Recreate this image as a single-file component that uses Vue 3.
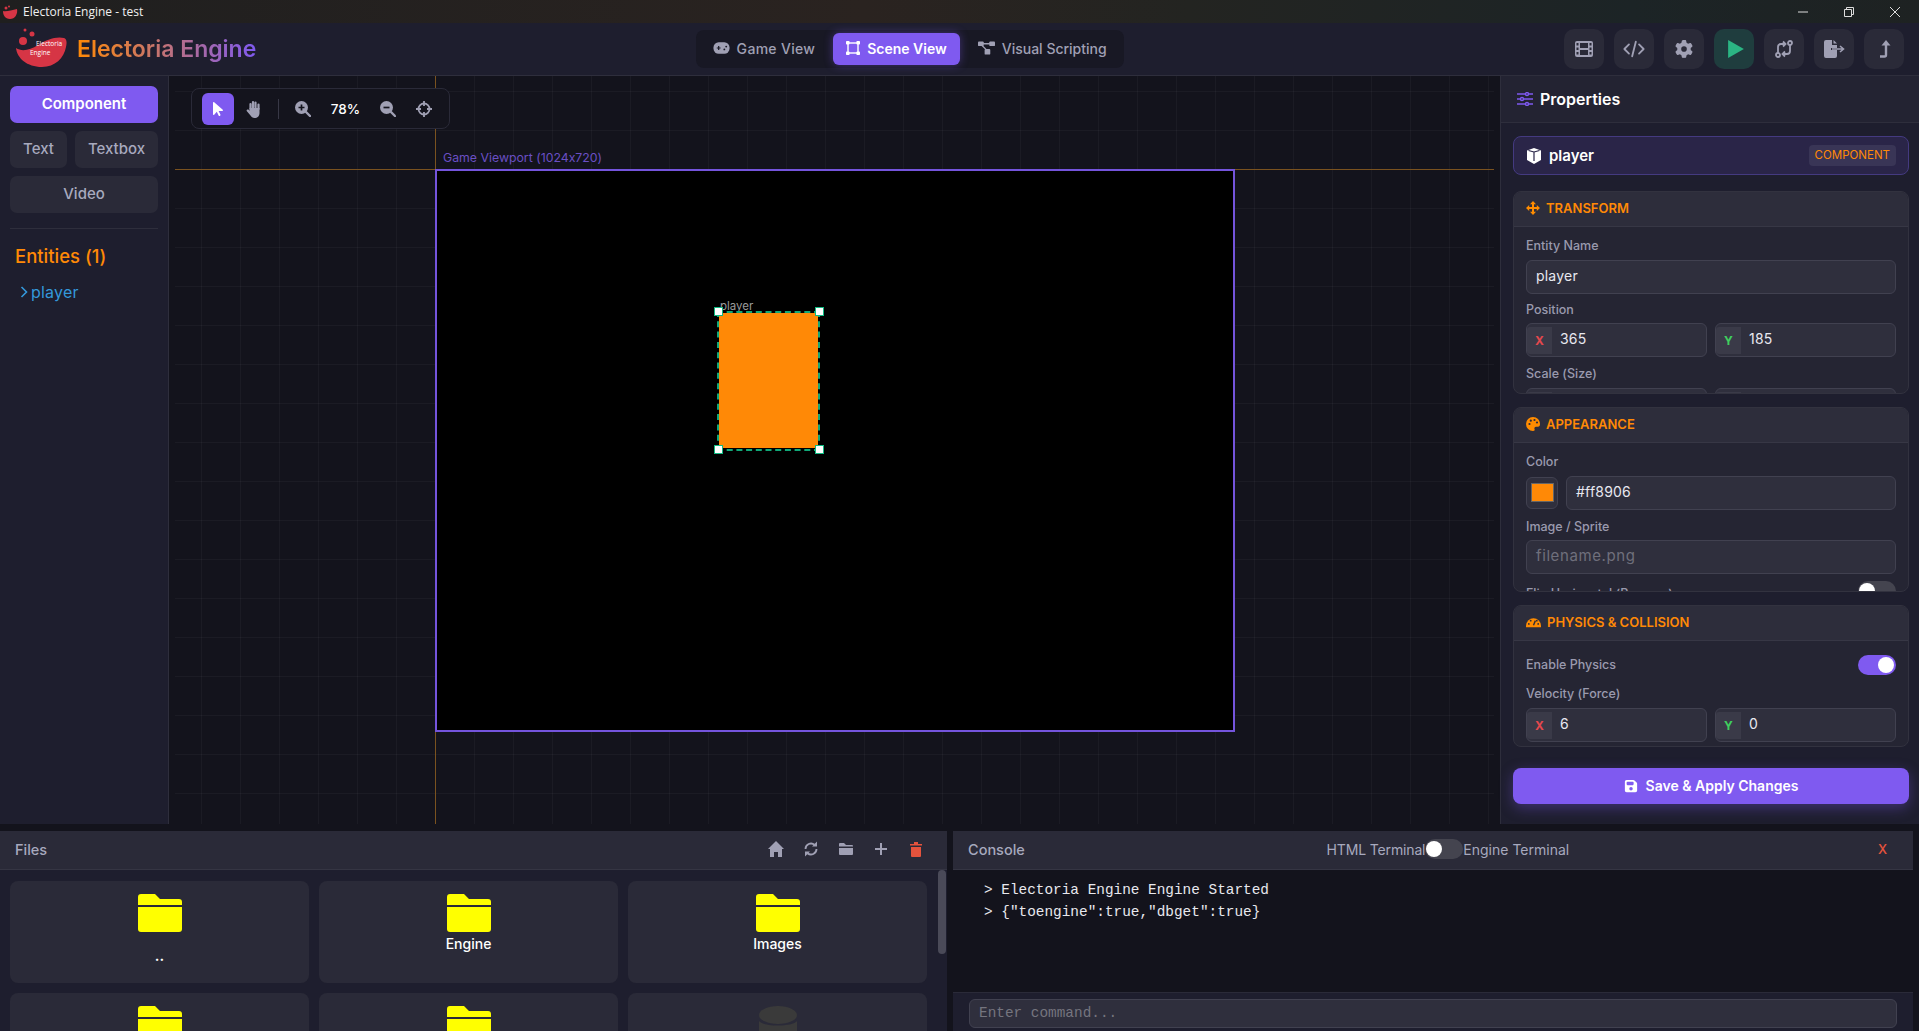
<template>
  <div class="app">
    <div class="titlebar">
      <svg class="tb-logo" viewBox="0 0 16 14"><path d="M1 6c3 1 9-1 14-2 1 5-2 10-7 10S1 10 1 6z" fill="#d63545"/><circle cx="4" cy="3" r="1.5" fill="#d63545"/><circle cx="7" cy="1.5" r="1" fill="#d63545"/></svg>
      <span class="tb-title">Electoria Engine - test</span>
      <div class="tb-ctrls">
        <svg viewBox="0 0 12 12"><path d="M1 6h10" stroke="#ddd" fill="none"/></svg>
        <svg viewBox="0 0 12 12"><path d="M1.5 3.5h7v7h-7zM3.5 3.5v-2h7v7h-2" stroke="#ddd" fill="none"/></svg>
        <svg viewBox="0 0 12 12"><path d="M1 1l10 10M11 1L1 11" stroke="#ddd" fill="none"/></svg>
      </div>
    </div>

    <header class="header">
      <div class="brand">
        <svg class="logo" viewBox="0 0 52 42">
          <circle cx="8" cy="14" r="4" fill="#d63545"/>
          <circle cx="17" cy="7" r="2.5" fill="#d63545"/>
          <circle cx="10" cy="3" r="1.5" fill="#d63545"/>
          <path d="M1 21c6 4 14 2 22-3 8-5 18-9 26-7 3 1 3 5 2 9-2 11-11 20-24 20-15 0-25-9-26-19z" fill="#d63545"/>
          <text x="21" y="19" class="logo-t">Electoria</text>
          <text x="15" y="28" class="logo-t">Engine</text>
        </svg>
        <span class="brand-name">Electoria Engine</span>
      </div>
      <nav class="tabs">
        <div class="tab">
          <svg viewBox="0 0 18 14"><rect x="0.5" y="1" width="17" height="12" rx="5.5" fill="#a0a0b4"/><path d="M4 7h4M6 5v4" stroke="#1a1a26" stroke-width="1.3"/><circle cx="12" cy="8.5" r="1" fill="#1a1a26"/><circle cx="14" cy="5.5" r="1" fill="#1a1a26"/></svg>
          Game View
        </div>
        <div class="tab active">
          <svg viewBox="0 0 14 14"><rect x="2" y="2" width="10" height="10" fill="none" stroke="#fff" stroke-width="1.4"/><g fill="#fff"><rect x="0" y="0" width="3.6" height="3.6" rx=".8"/><rect x="10.4" y="0" width="3.6" height="3.6" rx=".8"/><rect x="0" y="10.4" width="3.6" height="3.6" rx=".8"/><rect x="10.4" y="10.4" width="3.6" height="3.6" rx=".8"/></g></svg>
          Scene View
        </div>
        <div class="tab tight">
          <svg viewBox="0 0 18 14"><g fill="#a0a0b4"><rect x="0" y="0" width="6" height="5" rx="1"/><rect x="12" y="0" width="6" height="5" rx="1"/><rect x="7" y="8" width="6" height="6" rx="1"/></g><path d="M5 2.5h8M4 4l5 5" stroke="#a0a0b4" stroke-width="1.4" fill="none"/></svg>
          Visual Scripting
        </div>
      </nav>
      <div class="head-btns">
        <button class="hbtn">
          <svg viewBox="0 0 18 16"><rect x="0" y="0" width="18" height="16" rx="2" fill="#a0a0b4"/><g fill="#2a2a38"><rect x="5" y="2" width="8" height="5"/><rect x="5" y="9" width="8" height="5"/><rect x="1.5" y="2" width="2" height="2.5"/><rect x="1.5" y="6.5" width="2" height="2.5"/><rect x="1.5" y="11" width="2" height="2.5"/><rect x="14.5" y="2" width="2" height="2.5"/><rect x="14.5" y="6.5" width="2" height="2.5"/><rect x="14.5" y="11" width="2" height="2.5"/></g></svg>
        </button>
        <button class="hbtn">
          <svg viewBox="0 0 24 18" class="wide"><path d="M6.5 4L1.5 9l5 5M17.5 4l5 5-5 5M14 1l-4 16" stroke="#a0a0b4" stroke-width="2" fill="none" stroke-linecap="round" stroke-linejoin="round"/></svg>
        </button>
        <button class="hbtn">
          <svg viewBox="0 0 512 512"><path fill="#a0a0b4" d="M495.9 166.6c3.2 8.7 .5 18.4-6.4 24.6l-43.3 39.4c1.1 8.3 1.7 16.8 1.7 25.4s-.6 17.1-1.7 25.4l43.3 39.4c6.9 6.2 9.6 15.9 6.4 24.6c-4.4 11.9-9.7 23.3-15.8 34.3l-4.7 8.1c-6.6 11-14 21.4-22.1 31.2c-5.9 7.2-15.7 9.6-24.5 6.8l-55.7-17.7c-13.4 10.3-28.2 18.9-44 25.4l-12.5 57.1c-2 9.1-9 16.3-18.2 17.8c-13.8 2.3-28 3.5-42.5 3.5s-28.7-1.2-42.5-3.5c-9.2-1.5-16.2-8.7-18.2-17.8l-12.5-57.1c-15.8-6.5-30.6-15.1-44-25.4L83.1 425.9c-8.8 2.8-18.6 .3-24.5-6.8c-8.1-9.8-15.5-20.2-22.1-31.2l-4.7-8.1c-6.1-11-11.4-22.4-15.8-34.3c-3.2-8.7-.5-18.4 6.4-24.6l43.3-39.4C64.6 273.1 64 264.6 64 256s.6-17.1 1.7-25.4L22.4 191.2c-6.9-6.2-9.6-15.9-6.4-24.6c4.4-11.9 9.7-23.3 15.8-34.3l4.7-8.1c6.6-11 14-21.4 22.1-31.2c5.9-7.2 15.7-9.6 24.5-6.8l55.7 17.7c13.4-10.3 28.2-18.9 44-25.4l12.5-57.1c2-9.1 9-16.3 18.2-17.8C227.3 1.2 241.5 0 256 0s28.7 1.2 42.5 3.5c9.2 1.5 16.2 8.7 18.2 17.8l12.5 57.1c15.8 6.5 30.6 15.1 44 25.4l55.7-17.7c8.8-2.8 18.6-.3 24.5 6.8c8.1 9.8 15.5 20.2 22.1 31.2l4.7 8.1c6.1 11 11.4 22.4 15.8 34.3zM256 336a80 80 0 1 0 0-160 80 80 0 1 0 0 160z"/></svg>
        </button>
        <button class="hbtn play">
          <svg viewBox="0 0 14 16"><path d="M0 0l14 8-14 8z" fill="#2bb583"/></svg>
        </button>
        <button class="hbtn">
          <svg viewBox="0 0 18 18"><g fill="none" stroke="#a0a0b4" stroke-width="1.8"><circle cx="3" cy="15" r="2"/><circle cx="15" cy="3" r="2"/><path d="M3 13V7c0-2 1-3 3-3h4M15 5v6c0 2-1 3-3 3H8"/><path d="M8 1.5L10.5 4 8 6.5M10 11.5L7.5 14l2.5 2.5"/></g></svg>
        </button>
        <button class="hbtn">
          <svg viewBox="0 0 22 18" class="wide"><path d="M1 2a2 2 0 0 1 2-2h6v5h5v3H8v2h6v6a2 2 0 0 1-2 2H3a2 2 0 0 1-2-2z" fill="#a0a0b4"/><path d="M10.5 0L14 3.5h-3.5z" fill="#a0a0b4"/><path d="M9 9h11M17 6l3.500 3-3.500 3" stroke="#a0a0b4" stroke-width="1.6" fill="none"/></svg>
        </button>
        <button class="hbtn">
          <svg viewBox="0 0 14 18"><path d="M3 16.5h4.5a1.500 1.500 0 0 0 1.500-1.500V4" stroke="#a0a0b4" stroke-width="2.4" fill="none"/><path d="M4.5 5.5L9 0l4.500 5.500z" fill="#a0a0b4"/></svg>
        </button>
      </div>
    </header>

    <main class="main">
      <aside class="side">
        <div class="add-btns">
          <button class="add primary full">Component</button>
          <button class="add small">Text</button>
          <button class="add big">Textbox</button>
          <button class="add full">Video</button>
        </div>
        <div class="side-line"></div>
        <h3 class="ent-title">Entities (1)</h3>
        <div class="ent">
          <svg viewBox="0 0 8 12"><path d="M1.5 1l5 5-5 5" fill="none" stroke="#3498db" stroke-width="1.6"/></svg>
          player
        </div>
      </aside>

      <section class="canvas">
        <div class="guide-v"></div>
        <div class="guide-h"></div>
        <div class="vp-label">Game Viewport (1024x720)</div>
        <div class="viewport">
          <div class="entity"></div>
          <div class="ent-name">player</div>
          <div class="select">
            <i class="hd tl"></i><i class="hd tr"></i><i class="hd bl"></i><i class="hd br"></i>
          </div>
        </div>
        <div class="toolbar">
          <button class="tool on">
            <svg viewBox="0 0 320 512"><path fill="#fff" d="M0 55.200V426c0 12.200 9.900 22 22 22c6.300 0 12.400-2.700 16.600-7.500L121.200 346l58.100 116.300c7.900 15.800 27.100 22.200 42.900 14.300s22.200-27.100 14.300-42.900L179.800 320H297.900c12.200 0 22.100-9.900 22.100-22.100c0-6.300-2.700-12.300-7.400-16.500L38.600 37.900C34.300 34.100 28.900 32 23.200 32C10.400 32 0 42.400 0 55.200z"/></svg>
          </button>
          <button class="tool hand">
            <svg viewBox="0 0 16 18"><g stroke="#a0a0b4" stroke-width="2.2" stroke-linecap="round" fill="none"><path d="M4.500 9V4M7 8V2M9.500 8V2.500M12.500 9V4.500"/></g><path d="M3.500 8h10v5c0 3-2 5-5 5-2 0-3-1-4-2.500L.7 11c-.6-1 1-2.200 2-1.200l1 1z" fill="#a0a0b4"/></svg>
          </button>
          <div class="tool-sep"></div>
          <button class="tool">
            <svg viewBox="0 0 16 16"><circle cx="6.5" cy="6.5" r="6.5" fill="#a0a0b4"/><path d="M11 11l4 4" stroke="#a0a0b4" stroke-width="2.4" stroke-linecap="round"/><path d="M3.500 6.500h6M6.500 3.500v6" stroke="#14141d" stroke-width="1.7"/></svg>
          </button>
          <span class="zoom">78%</span>
          <button class="tool">
            <svg viewBox="0 0 16 16"><circle cx="6.5" cy="6.5" r="6.5" fill="#a0a0b4"/><path d="M11 11l4 4" stroke="#a0a0b4" stroke-width="2.4" stroke-linecap="round"/><path d="M3.500 6.500h6" stroke="#14141d" stroke-width="1.7"/></svg>
          </button>
          <button class="tool aim">
            <svg viewBox="0 0 16 16"><circle cx="8" cy="8" r="5.5" fill="none" stroke="#a0a0b4" stroke-width="1.8"/><path d="M8 0v5M8 11v5M0 8h5M11 8h5" stroke="#a0a0b4" stroke-width="1.8"/></svg>
          </button>
        </div>
      </section>

      <aside class="props">
        <div class="props-head">
          <svg viewBox="0 0 16 14"><g stroke="#7f5af0" stroke-width="1.4" fill="#20202e"><path d="M0 2h16M0 7h16M0 12h16"/><circle cx="10" cy="2" r="1.5"/><circle cx="5" cy="7" r="1.5"/><circle cx="10" cy="12" r="1.5"/></g></svg>
          Properties
        </div>
        <div class="props-body">
          <div class="sel-card">
            <svg viewBox="0 0 16 16"><path d="M8 0l7 2.500V12l-7 4-7-4V2.500z" fill="#fff"/><path d="M8 4v9M8 4L2.500 2.500M8 4l5.500-1.500" stroke="#2a2548" stroke-width="1.2" fill="none"/></svg>
            <span class="sel-name">player</span>
            <span class="sel-tag">COMPONENT</span>
          </div>

          <section class="group g-trans">
            <div class="g-head">
              <svg viewBox="0 0 14 14"><path d="M7 0l3 3.200H8V6h2.800V4L14 7l-3.200 3V8H8v2.800h2L7 14l-3-3.200h2V8H3.200v2L0 7l3.200-3v2H6V3.200H4z" fill="#ff8c00"/></svg>
              TRANSFORM
            </div>
            <div class="g-body">
              <label class="lbl">Entity Name</label>
              <div class="field">player</div>
              <label class="lbl">Position</label>
              <div class="xy">
                <div class="field num"><b class="ax x">X</b>365</div>
                <div class="field num"><b class="ax y">Y</b>185</div>
              </div>
              <label class="lbl">Scale (Size)</label>
              <div class="xy">
                <div class="field num"><b class="ax"></b></div>
                <div class="field num"><b class="ax"></b></div>
              </div>
            </div>
          </section>

          <section class="group g-look">
            <div class="g-head">
              <svg viewBox="0 0 14 14"><path d="M7 0a7 7 0 0 0 0 14c1.500 0 2-1 1.500-2-.5-1.300.3-2.300 1.500-2.300h2c1.300 0 2-1 2-2.700C14 3 11 0 7 0z" fill="#ff8c00"/><g fill="#2d2d3b"><circle cx="3.5" cy="7" r="1.1"/><circle cx="4.8" cy="3.7" r="1.1"/><circle cx="8.5" cy="3" r="1.1"/><circle cx="11" cy="5.5" r="1.1"/></g></svg>
              APPEARANCE
            </div>
            <div class="g-body">
              <label class="lbl">Color</label>
              <div class="color-row">
                <div class="swatch"><i></i></div>
                <div class="field grow">#ff8906</div>
              </div>
              <label class="lbl">Image / Sprite</label>
              <div class="field ph">filename.png</div>
              <div class="row-toggle flip">
                <label class="lbl">Flip Horizontal (Reverse)</label>
                <span class="switch"><i></i></span>
              </div>
            </div>
          </section>

          <section class="group g-phys">
            <div class="g-head">
              <svg viewBox="0 4 16 10" class="gauge"><path d="M0 12.500a8 8 0 0 1 16 0V14H0z" fill="#ff8c00"/><g fill="#2d2d3b"><circle cx="3" cy="10.5" r="1"/><circle cx="5" cy="7" r="1"/><circle cx="13" cy="10.5" r="1"/><circle cx="11.5" cy="7" r="1"/></g><path d="M8 12l2-5" stroke="#2d2d3b" stroke-width="1.5"/></svg>
              PHYSICS &amp; COLLISION
            </div>
            <div class="g-body">
              <div class="row-toggle">
                <label class="lbl">Enable Physics</label>
                <span class="switch on"><i></i></span>
              </div>
              <label class="lbl">Velocity (Force)</label>
              <div class="xy">
                <div class="field num"><b class="ax x">X</b>6</div>
                <div class="field num"><b class="ax y">Y</b>0</div>
              </div>
            </div>
          </section>

          <button class="save">
            <svg viewBox="0 0 448 512"><path fill="#fff" d="M64 32C28.700 32 0 60.700 0 96V416c0 35.300 28.700 64 64 64H384c35.300 0 64-28.700 64-64V173.300c0-17-6.700-33.300-18.700-45.300L352 50.700C340 38.700 323.700 32 306.700 32H64zm0 96c0-17.700 14.300-32 32-32H288c17.700 0 32 14.300 32 32v64c0 17.700-14.300 32-32 32H96c-17.700 0-32-14.300-32-32V128zM224 288a64 64 0 1 1 0 128 64 64 0 1 1 0-128z"/></svg>
            Save &amp; Apply Changes
          </button>
        </div>
      </aside>
    </main>

    <div class="bottom">
      <section class="files">
        <div class="panel-head">
          <span class="panel-title">Files</span>
          <div class="file-tools">
            <svg viewBox="0 0 16 16"><path d="M8 0l8 8h-2v8h-4v-5H6v5H2V8H0z" fill="#a0a0b4"/></svg>
            <svg viewBox="0 0 14 16"><g fill="none" stroke="#a0a0b4" stroke-width="1.8"><path d="M1.500 8a5.500 5.500 0 0 1 9-4.200M12.500 8a5.500 5.500 0 0 1-9 4.200"/></g><path d="M13 .5v5H8zM1 15.500v-5h5z" fill="#a0a0b4"/></svg>
            <svg viewBox="0 0 16 16"><path d="M1 3a1 1 0 0 1 1-1h4l2 2h6a1 1 0 0 1 1 1v.5H1zM1 7h14v6a1 1 0 0 1-1 1H2a1 1 0 0 1-1-1z" fill="#a0a0b4"/></svg>
            <svg viewBox="0 0 16 16"><path d="M8 2v12M2 8h12" stroke="#a0a0b4" stroke-width="2"/></svg>
            <svg viewBox="0 0 14 16"><path d="M1 3h12v1.500H1zM5 1h4v2H5zM2 6h10v9a1 1 0 0 1-1 1H3a1 1 0 0 1-1-1z" fill="#e5533d"/></svg>
          </div>
        </div>
        <div class="file-grid">
          <div v-for="f in files" :key="f.id" class="file">
            <svg v-if="f.type == 'folder'" class="folder" viewBox="0 0 44 38">
              <path d="M0 3a3 3 0 0 1 3-3h14l5 5h19a3 3 0 0 1 3 3v3H0z" fill="#ffff00"/>
              <path d="M0 13h44v22a3 3 0 0 1-3 3H3a3 3 0 0 1-3-3z" fill="#ffff00"/>
            </svg>
            <svg v-else class="folder" viewBox="0 0 44 38">
              <ellipse cx="22" cy="9" rx="19" ry="9" fill="#3a3a3a"/>
              <path d="M3 15c4 6 34 6 38 0v14c-4 8-34 8-38 0z" fill="#3a3a3a"/>
            </svg>
            <span v-if="f.name" class="file-name" :class="{ up: f.name == '..' }">{{ f.name }}</span>
          </div>
        </div>
        <div class="scroll-thumb"></div>
      </section>

      <section class="console">
        <div class="panel-head">
          <span class="panel-title">Console</span>
          <div class="term-switch">
            <span class="html-label">HTML Terminal</span>
            <span class="switch"><i></i></span>
            <span>Engine Terminal</span>
          </div>
          <span class="close">X</span>
        </div>
        <div class="log">
          <div v-for="(l, i) in logs" :key="i" class="log-line">&gt; {{ l }}</div>
        </div>
        <div class="cmd-row">
          <div class="cmd">Enter command...</div>
        </div>
      </section>
    </div>
  </div>
</template>

<script setup>
const files = [
  { id: 1, name: '..', type: 'folder' },
  { id: 2, name: 'Engine', type: 'folder' },
  { id: 3, name: 'Images', type: 'folder' },
  { id: 4, name: '', type: 'folder' },
  { id: 5, name: '', type: 'folder' },
  { id: 6, name: '', type: 'db' }
]

const logs = [
  'Electoria Engine Engine Started',
  '{"toengine":true,"dbget":true}'
]
</script>

<style>
body { margin: 0; background: #13131c; }
</style>

<style scoped>
.app {
  width: 1919px;
  height: 1031px;
  overflow: hidden;
  display: flex;
  flex-direction: column;
  background: #13131c;
  font-family: Inter, "Open Sans", sans-serif;
  font-feature-settings: "calt" 0;
  color: #fffffe;
}

button {
  font-family: inherit;
  font-feature-settings: inherit;
  border: none;
  padding: 0;
}

/* title bar */
.titlebar {
  height: 23px;
  flex: none;
  display: flex;
  align-items: center;
  background: linear-gradient(90deg, #1f1f1f, #2a2320 45%, #232421 62%, #1c2426 85%, #1e2222);
}
.tb-logo { width: 16px; height: 14px; margin-left: 2px; }
.tb-title {
  margin-left: 5px;
  font-family: "Open Sans", sans-serif;
  font-size: 12px;
  color: #f0f0f0;
}
.tb-ctrls {
  margin-left: auto;
  display: flex;
  gap: 34px;
  padding-right: 18px;
}
.tb-ctrls svg { width: 12px; height: 12px; display: block; }

/* header */
.header {
  height: 53px;
  flex: none;
  box-sizing: border-box;
  display: flex;
  align-items: center;
  justify-content: space-between;
  padding: 0 15px;
  background: #1e1e2e;
  border-bottom: 1px solid #2e2e3c;
}
.brand { display: flex; align-items: center; gap: 10px; }
.logo { width: 52px; height: 42px; margin-top: -2px; }
.logo-t { font-size: 6.5px; fill: #fff; font-family: "Open Sans", sans-serif; }
.brand-name {
  font-size: 23px;
  font-weight: 600;
  background: linear-gradient(90deg, #ff8906, #7f5af0);
  -webkit-background-clip: text;
  background-clip: text;
  color: transparent;
}
.tabs {
  display: flex;
  align-items: center;
  gap: 4px;
  height: 38px;
  box-sizing: border-box;
  padding: 3px;
  margin-left: -1px;
  background: #181824;
  border-radius: 8px;
}
.tab {
  height: 32px;
  box-sizing: border-box;
  display: flex;
  align-items: center;
  gap: 7px;
  padding: 0 14px 2px;
  border-radius: 6px;
  font-size: 14px;
  font-weight: 500;
  letter-spacing: .3px;
  color: #a0a0b4;
}
.tab.tight { letter-spacing: 0; }
.tab svg { width: 17px; height: 14px; }
.tab.active {
  padding: 0 13px 2px;
  background: #7f5af0;
  color: #fff;
  font-weight: 600;
  letter-spacing: 0;
  box-shadow: 0 0 10px rgba(127, 90, 240, .4);
}
.tab.active svg { width: 14px; }
.head-btns { display: flex; gap: 10px; }
.hbtn {
  width: 40px;
  height: 40px;
  display: flex;
  align-items: center;
  justify-content: center;
  background: #2a2a38;
  border-radius: 10px;
}
.hbtn svg { width: 18px; height: 18px; }
.hbtn svg.wide { width: 22px; }
.hbtn.play { background: #1f3d3e; }
.hbtn.play svg { margin-left: 4px; }

/* main */
.main { height: 748px; flex: none; display: flex; }

.side {
  width: 169px;
  flex: none;
  box-sizing: border-box;
  padding: 10px 10px 0;
  background: #1e1e2e;
  border-right: 1px solid #2e2e3c;
}
.add-btns { display: flex; flex-wrap: wrap; gap: 8px; }
.add {
  height: 37px;
  padding-bottom: 2px;
  border-radius: 7px;
  background: #2a2a38;
  color: #a7a9be;
  font-size: 15px;
  font-weight: 500;
}
.add.full { width: 148px; }
.add.small { width: 57px; }
.add.big { width: 83px; }
.add.primary { background: #7f5af0; color: #fff; font-weight: 600; }
.side-line { height: 1px; background: #2e2e3c; margin: 15px 0 0; }
.ent-title {
  margin: 15px 0 0 5px;
  font-size: 18.5px;
  line-height: 24px;
  font-weight: 500;
  color: #ff8906;
}
.ent {
  display: flex;
  align-items: center;
  gap: 3px;
  margin: 14px 0 0 10px;
  font-size: 16px;
  letter-spacing: .2px;
  color: #3498db;
}
.ent svg { width: 8px; height: 12px; }

/* canvas */
.canvas {
  flex: 1;
  position: relative;
  overflow: hidden;
  margin: 0 6px;
  background-color: #13131c;
  background-image:
    linear-gradient(rgba(255, 255, 255, .035) 1px, transparent 1px),
    linear-gradient(90deg, rgba(255, 255, 255, .035) 1px, transparent 1px);
  background-size: 39px 39px;
  background-position: 26px 15px;
}
.guide-v {
  position: absolute;
  left: 260px;
  top: 0;
  bottom: 0;
  width: 1px;
  background: #7a521f;
}
.guide-h {
  position: absolute;
  left: 0;
  right: 0;
  top: 93px;
  height: 1px;
  background: #7a521f;
}
.vp-label {
  position: absolute;
  left: 268px;
  top: 74px;
  font-size: 12.3px;
  color: #6a4fc4;
}
.viewport {
  position: absolute;
  left: 260px;
  top: 93px;
  width: 800px;
  height: 563px;
  box-sizing: border-box;
  background: #000;
  border: 2px solid #7454dc;
}
.entity {
  position: absolute;
  left: 282px;
  top: 142px;
  width: 99px;
  height: 135px;
  background: #ff8906;
}
.ent-name {
  position: absolute;
  left: 283px;
  top: 129px;
  font-size: 11.5px;
  line-height: 13px;
  color: #9a9a9a;
}
.select {
  position: absolute;
  left: 280px;
  top: 140px;
  width: 103px;
  height: 140px;
  box-sizing: border-box;
  border: 2px dashed #10a878;
}
.hd {
  position: absolute;
  width: 9px;
  height: 9px;
  box-sizing: border-box;
  background: #fff;
  border: 1px solid #10b981;
}
.tl { left: -5px; top: -6px; }
.tr { right: -6px; top: -6px; }
.bl { left: -5px; bottom: -5px; }
.br { right: -6px; bottom: -5px; }

.toolbar {
  position: absolute;
  left: 16px;
  top: 12px;
  width: 259px;
  height: 41px;
  box-sizing: border-box;
  display: flex;
  align-items: center;
  padding: 0 10px;
  background: #14141d;
  border: 1px solid #2a2a38;
  border-radius: 8px;
}
.tool {
  width: 32px;
  height: 32px;
  flex: none;
  display: flex;
  align-items: center;
  justify-content: center;
  background: none;
  border-radius: 6px;
}
.tool svg { width: 16px; height: 16px; }
.tool.on { background: #7f5af0; }
.tool.hand { margin-left: 4px; }
.tool.hand svg { width: 16px; height: 18px; }
.tool.aim { margin-left: 4px; }
.tool-sep { width: 1px; height: 20px; flex: none; margin: 0 8px; background: #383846; }
.zoom {
  width: 53px;
  flex: none;
  text-align: center;
  font-size: 13.5px;
  font-weight: 500;
  color: #fff;
}

/* properties */
.props {
  width: 419px;
  flex: none;
  box-sizing: border-box;
  background: #1e1e2e;
  border-left: 1px solid #2e2e3c;
  display: flex;
  flex-direction: column;
}
.props-head {
  height: 47px;
  flex: none;
  box-sizing: border-box;
  display: flex;
  align-items: center;
  gap: 7px;
  padding-left: 16px;
  font-size: 16px;
  font-weight: 600;
  background: #232332;
  border-bottom: 1px solid #2e2e3c;
}
.props-head svg { width: 16px; height: 14px; }
.props-body { padding: 13px 10px 0 12px; }
.sel-card {
  height: 39px;
  box-sizing: border-box;
  display: flex;
  align-items: center;
  padding: 0 12px;
  background: #2a2548;
  border: 1px solid #443a80;
  border-radius: 8px;
}
.sel-card svg { width: 16px; height: 16px; }
.sel-name { margin-left: 7px; font-size: 15px; font-weight: 600; }
.sel-tag {
  margin-left: auto;
  height: 21px;
  line-height: 21px;
  padding: 0 6px;
  font-size: 11.5px;
  color: #ff8906;
  background: #393556;
  border-radius: 4px;
}
.group {
  box-sizing: border-box;
  margin-top: 13px;
  overflow: hidden;
  background: #252533;
  border: 1px solid #32323f;
  border-radius: 8px;
}
.g-trans { height: 203px; margin-top: 16px; }
.g-look { height: 185px; }
.g-phys { height: 142px; }
.g-head {
  height: 35px;
  box-sizing: border-box;
  display: flex;
  align-items: center;
  gap: 6px;
  padding: 0 0 2px 12px;
  font-size: 13px;
  font-weight: 600;
  color: #ff8906;
  background: #2d2d3b;
  border-bottom: 1px solid #373745;
}
.g-head svg { width: 14px; height: 14px; }
.g-head svg.gauge { width: 15px; height: 11px; }
.g-body { padding: 9px 12px 0; }
.g-phys .g-body { padding-top: 14px; }
.lbl {
  display: block;
  height: 18px;
  line-height: 18px;
  margin-top: 1px;
  margin-bottom: 4.5px;
  font-size: 12.5px;
  font-weight: 500;
  color: #9a9aae;
}
.field {
  height: 34px;
  box-sizing: border-box;
  display: flex;
  align-items: center;
  padding: 0 0 3px 9px;
  margin-bottom: 7px;
  font-size: 14px;
  letter-spacing: .2px;
  color: #e8e8f0;
  background: #2f2f3d;
  border: 1px solid #414150;
  border-radius: 6px;
}
.field.ph { font-size: 15px; letter-spacing: .6px; color: #6f6f7c; }
.xy { display: flex; gap: 8px; }
.xy .field { flex: 1; padding-left: 0; }
.ax {
  width: 25px;
  height: 27px;
  margin: 3px 8px 0 0;
  align-self: flex-start;
  display: flex;
  align-items: center;
  justify-content: center;
  font-size: 12px;
  background: #3a3a48;
  border-radius: 3px 0 0 3px;
}
.ax.x { color: #e5484d; }
.ax.y { color: #3fcf5e; }
.color-row { display: flex; gap: 8px; }
.grow { flex: 1; }
.swatch {
  width: 32px;
  height: 32px;
  margin-top: 1px;
  flex: none;
  box-sizing: border-box;
  display: flex;
  align-items: center;
  justify-content: center;
  background: #2f2f3d;
  border: 1px solid #414150;
  border-radius: 6px;
}
.swatch i { width: 21px; height: 17px; background: #ff8906; border: 1px solid #666; }
.row-toggle {
  display: flex;
  align-items: center;
  justify-content: space-between;
  height: 20px;
  margin-bottom: 10px;
}
.row-toggle .lbl { margin: 0; }
.flip { margin-top: 5px; }
.flip .lbl { margin-top: 5px; }
.switch {
  display: flex;
  align-items: center;
  width: 38px;
  height: 20px;
  box-sizing: border-box;
  padding: 0 1px;
  background: #44444f;
  border-radius: 10px;
}
.switch i {
  width: 16px;
  height: 16px;
  background: #fff;
  border-radius: 50%;
}
.switch.on { background: #7f5af0; justify-content: flex-end; padding-right: 2px; }
.save {
  width: 100%;
  height: 36px;
  margin-top: 21px;
  padding-bottom: 1px;
  display: flex;
  align-items: center;
  justify-content: center;
  gap: 8px;
  font-size: 14px;
  font-weight: 600;
  color: #fff;
  background: #7f5af0;
  border-radius: 8px;
  box-shadow: 0 4px 14px rgba(127, 90, 240, .35);
}
.save svg { width: 14px; height: 14px; }

/* bottom */
.bottom {
  flex: none;
  height: 200px;
  margin-top: 7px;
  display: flex;
  gap: 6px;
  padding-right: 6px;
}
.panel-head {
  height: 39px;
  flex: none;
  box-sizing: border-box;
  display: flex;
  align-items: center;
  justify-content: space-between;
  padding: 0 15px 2px;
  background: #2a2a38;
  border-bottom: 1px solid #353543;
}
.panel-title { font-size: 14.5px; font-weight: 500; color: #a7a9be; }

.files {
  position: relative;
  width: 947px;
  flex: none;
  overflow: hidden;
  background: #1e1e2e;
}
.file-tools { display: flex; gap: 19px; padding-right: 8px; }
.file-tools svg { width: 16px; height: 16px; }
.file-grid {
  display: grid;
  grid-template-columns: repeat(3, 299px);
  grid-auto-rows: 102px;
  gap: 10px;
  padding: 11px 0 0 10px;
}
.file {
  display: flex;
  flex-direction: column;
  align-items: center;
  padding-top: 13px;
  background: #2a2a38;
  border-radius: 8px;
}
.folder { width: 44px; height: 38px; flex: none; }
.file-name { margin-top: 3px; font-size: 14px; font-weight: 500; color: #fffffe; }
.file-name.up { margin-top: 15px; font-weight: 700; }
.scroll-thumb {
  position: absolute;
  left: 938px;
  top: 39px;
  width: 8px;
  height: 84px;
  background: #4a4a58;
  border-radius: 4px;
}

.console {
  flex: 1;
  display: flex;
  flex-direction: column;
  background: #13131c;
}
.term-switch {
  display: flex;
  align-items: center;
  margin-right: 7px;
  font-size: 14px;
  color: #a7a9be;
}
.html-label { letter-spacing: -.15px; }
.close { color: #e5533d; font-size: 13px; font-weight: 500; padding-right: 11px; }
.log {
  flex: 1;
  padding: 9px 0 0 31px;
  font-family: "Liberation Mono", monospace;
  font-size: 14.4px;
  color: #e8e8ee;
}
.log-line { height: 22px; line-height: 22px; }
.cmd-row {
  height: 39px;
  flex: none;
  box-sizing: border-box;
  padding: 6px 16px 0;
  background: #1e1e2e;
  border-top: 1px solid #2a2a38;
}
.cmd {
  height: 29px;
  box-sizing: border-box;
  padding-left: 9px;
  line-height: 27px;
  font-family: "Liberation Mono", monospace;
  font-size: 14.4px;
  color: #75757f;
  background: #2f2f3d;
  border: 1px solid #414150;
  border-radius: 6px;
}
</style>
